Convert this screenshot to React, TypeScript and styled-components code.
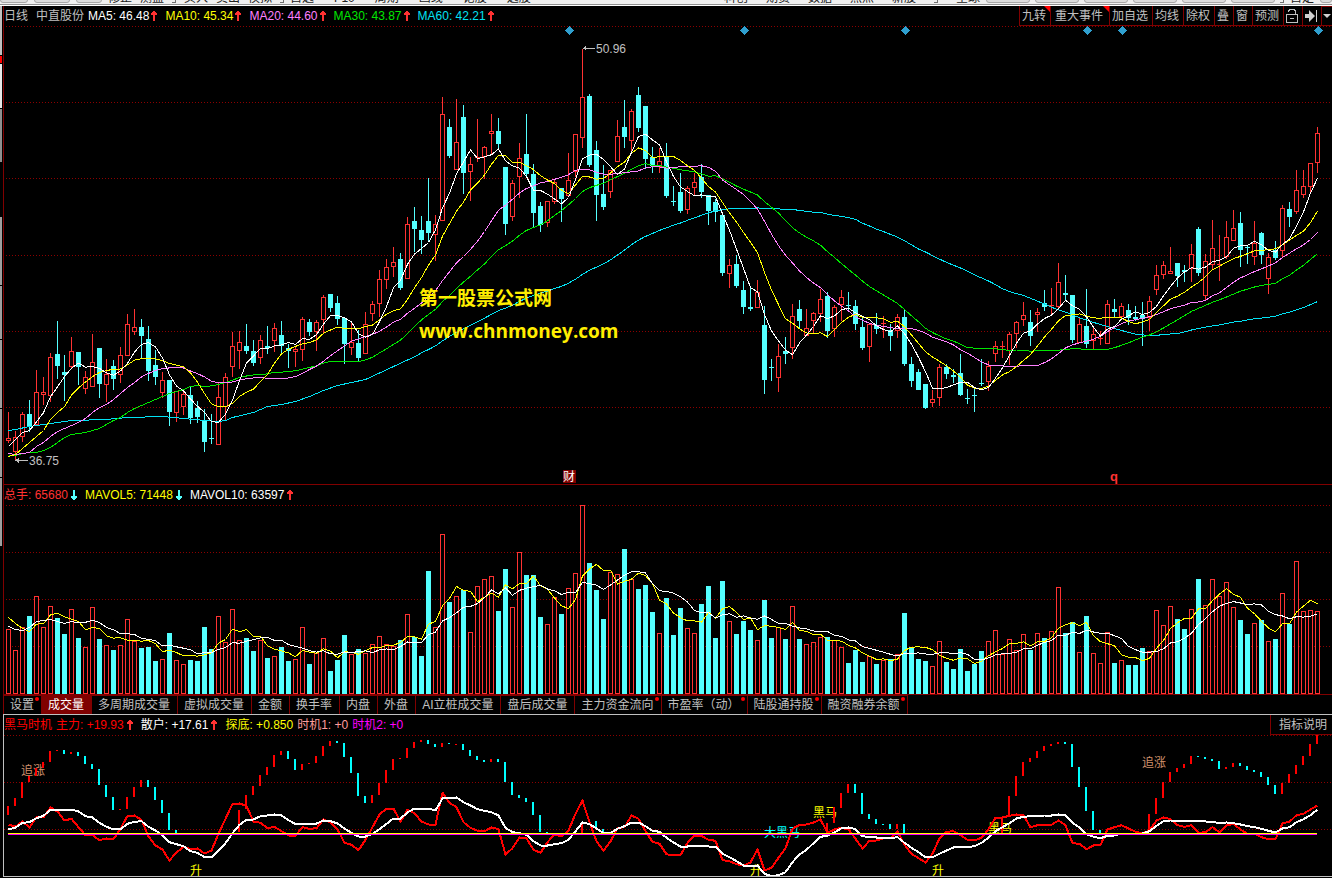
import React from 'react';
import styled, { createGlobalStyle } from 'styled-components';

const GlobalStyle = createGlobalStyle`
  * { box-sizing: border-box; }
  body {
    margin: 0;
    background: #000;
    color: #c0c0c0;
    font: 12px/20px "Liberation Sans", "Noto Sans CJK SC", sans-serif;
  }
  button {
    font: inherit;
    color: inherit;
    background: none;
    border: 0;
    padding: 0;
    cursor: pointer;
  }
`;

/* ---------- colours ---------- */

const UP = '#ff3232';
const DOWN = '#54ffff';
const FRAME = '#800000';
const GRID = '#8c0000';
const WHITE = '#ffffff';
const YELLOW = '#ffff00';
const PINK = '#ff80ff';
const GREEN = '#00e600';
const AQUA = '#02e2f4';

/* ---------- market data ---------- */

type Direction = 'u' | 'd';
interface Bar {
  dir: Direction;
  high: number;
  top: number;
  bottom: number;
  low: number;
  volume: number;
}

// One session per entry: direction, high, body top, body bottom, low, volume top.
const SESSIONS = `
u 412 438 440 443 629|u 431 437 451 460 650|u 412 414 436 442 627|d 400 414 427 432 616
u 370 392 424 425 596|u 377 392 394 405 627|u 353 357 395 402 606|d 321 354 366 379 618
d 355 372 375 401 634|u 337 351 366 369 609|d 352 352 367 385 638|u 371 377 388 394 647
u 334 362 386 386 607|d 348 348 384 398 639|u 359 374 384 402 645|d 360 366 379 390 650
u 347 355 374 383 645|u 314 324 355 355 619|u 309 327 331 335 641|d 319 327 336 358 648
d 326 339 371 381 647|d 350 365 377 385 661|u 372 380 392 398 659|d 380 380 412 426 633
u 391 391 412 422 660|u 392 394 406 415 664|d 387 395 418 424 660|d 401 408 417 423 661
d 409 420 442 452 627|d 414 438 439 444 649|u 382 397 444 444 616|u 373 377 406 421 642
u 332 346 366 377 609|u 331 342 350 369 640|d 324 346 351 354 638|d 340 351 363 366 651
u 335 340 357 364 640|d 326 346 348 354 658|u 323 328 340 352 656|d 321 335 346 353 647
d 344 348 351 368 661|u 347 349 351 367 659|u 317 319 349 361 627|d 319 322 332 336 664
u 320 322 331 351 653|u 295 297 319 333 638|d 294 294 308 312 671|d 296 303 319 325 660
d 318 318 344 364 635|u 323 342 347 355 654|d 330 343 358 361 649|u 312 324 353 353 653
u 301 304 313 321 644|u 270 279 303 317 636|u 259 267 279 289 644|u 247 262 266 277 646
d 253 259 288 290 640|u 217 224 278 278 614|d 207 221 229 252 637|d 216 230 240 254 656
d 178 221 233 242 571|u 215 224 234 261 627|u 97 114 220 220 534|d 119 127 156 158 602
u 99 142 169 169 596|d 105 117 173 194 590|u 157 164 171 201 632|u 119 157 158 162 586
u 146 147 156 179 579|u 114 131 133 155 576|d 118 131 144 150 611|d 167 167 224 235 569
u 180 183 216 221 607|u 143 158 176 198 552|d 114 154 174 177 575|d 164 174 213 227 575
d 202 206 225 232 617|u 201 201 222 227 624|u 179 182 201 204 597|d 188 188 199 222 614
u 153 180 195 195 588|u 134 134 171 177 573|u 49 97 137 148 505|d 94 96 165 167 563
d 141 150 195 221 590|d 165 194 207 210 619|u 170 170 191 198 572|u 120 136 161 161 574
d 100 127 137 148 549|u 109 111 140 152 579|d 87 95 128 132 589|d 106 106 159 169 585
d 147 157 166 173 612|u 148 161 166 173 633|d 143 157 196 198 598|d 186 201 202 206 635
d 173 192 211 213 608|u 186 188 209 214 628|u 173 182 187 195 633|d 164 177 192 198 604
d 195 195 211 225 586|d 199 202 212 222 638|d 212 215 273 276 581|u 259 265 273 288 621
d 255 264 286 288 634|d 281 290 307 314 621|d 287 307 309 311 630|u 280 292 307 307 640
d 306 325 380 394 600|d 359 367 368 381 638|u 344 356 377 392 627|d 337 351 354 364 639
u 304 316 347 359 606|d 300 309 321 329 639|u 309 328 335 336 644|u 312 313 320 333 642
u 289 299 313 322 637|d 292 296 331 338 637|u 305 307 328 337 640|u 290 297 304 321 647
d 292 305 306 312 663|d 300 306 324 330 650|d 318 327 348 350 662|u 323 324 346 362 656
d 313 325 329 334 664|u 316 323 324 338 660|d 324 330 336 351 659|u 314 317 330 338 654
d 309 317 364 366 613|d 357 364 381 387 647|d 369 372 390 390 659|d 384 384 408 409 661
u 390 399 402 407 666|u 364 367 397 406 641|d 364 367 374 379 662|d 369 375 377 383 669
d 354 373 395 396 649|d 389 398 399 404 671|d 388 395 396 412 664|d 359 383 384 386 651
u 361 366 381 391 641|u 341 346 353 362 630|u 341 346 347 358 654|u 332 334 350 365 639
u 321 322 333 348 650|u 302 315 319 326 634|d 310 322 336 346 650|u 308 312 314 332 633
d 290 303 307 311 638|u 288 305 306 314 631|u 263 282 306 310 587|d 275 293 295 301 633
d 295 295 340 343 622|u 318 324 342 342 652|d 289 326 344 348 616|u 328 334 340 350 653
u 331 338 339 345 663|u 300 304 343 343 632|d 299 309 312 317 663|u 303 306 316 318 660
d 304 310 318 325 665|d 306 317 319 321 665|d 302 315 319 346 648|u 296 301 317 331 651
u 265 275 289 295 610|u 261 265 274 279 625|u 247 271 273 273 606|d 263 263 276 287 619
d 265 270 272 282 629|u 244 254 268 282 609|d 227 229 273 276 579|u 254 261 295 301 605
u 220 248 264 269 579|u 235 264 265 281 596|u 221 237 256 259 582|u 210 228 240 240 607
d 212 223 250 267 620|d 245 247 248 264 634|u 221 243 256 265 623|d 232 233 255 264 620
u 253 257 278 294 641|d 241 250 258 260 639|u 205 208 250 257 593|d 202 209 217 227 624
u 170 190 211 214 561|u 170 186 194 198 611|u 163 163 186 192 610|u 127 133 162 173 611
`;

const BARS: Bar[] = SESSIONS.trim()
  .split(/[|\n]/)
  .map((entry) => {
    const [dir, ...n] = entry.trim().split(' ');
    const [high, top, bottom, low, volume] = n.map(Number);
    return { dir: dir as Direction, high, top, bottom, low, volume };
  });

const PITCH = 7;
const barX = (i: number) => 4 + PITCH * i;

type Key = [number, number];

// Linear interpolation through sparse keys; covers sessions older than the window.
function between(keys: Key[], i: number): number {
  for (let k = 1; k < keys.length; k++) {
    const [x0, y0] = keys[k - 1];
    const [x1, y1] = keys[k];
    if (i <= x1) return y0 + ((y1 - y0) * (i - x0)) / (x1 - x0);
  }
  return keys[keys.length - 1][1];
}

function average(values: number[], period: number, lead: Key[]): number[] {
  return values.map((_, i) => {
    if (i < period - 1) return between(lead, i);
    let sum = 0;
    for (let k = i - period + 1; k <= i; k++) sum += values[k];
    return sum / period;
  });
}

const CLOSES = BARS.map((b) => (b.dir === 'u' ? b.top : b.bottom - 1));
const VOLUMES = BARS.map((b) => b.volume);

const seq = (...ys: number[]): Key[] => ys.map((y, i) => [i, y]);

const PRICE_LINES: { color: string; values: number[] }[] = [
  {
    color: AQUA,
    values: average(CLOSES, 60, [
      [0, 430], [1, 429], [3, 426], [5, 424], [7, 422], [9, 420], [14, 419], [17, 417], [22, 416],
      [25, 418], [28, 420], [30, 421], [31, 420], [32, 417], [35, 412], [37, 406], [39, 404],
      [41, 401], [43, 396], [45, 390], [47, 385], [51, 379], [59, 353],
    ]),
  },
  {
    color: GREEN,
    values: average(CLOSES, 30, seq(
      455, 455, 453, 452, 452, 450, 447, 442, 437, 434, 433, 432, 430, 428, 424, 420, 417, 412,
      408, 405, 402, 399, 396, 393, 391, 389, 386, 385, 386,
    )),
  },
  {
    color: PINK,
    values: average(CLOSES, 20, seq(
      453, 454, 453, 452, 446, 442, 436, 431, 428, 425, 422, 418, 412, 407, 404, 399, 393, 387, 382,
    )),
  },
  { color: YELLOW, values: average(CLOSES, 10, seq(456, 454, 448, 442, 436, 430, 419, 412, 406)) },
  { color: WHITE, values: average(CLOSES, 5, seq(446, 439, 432, 430)) },
];

const VOLUME_LINES = [
  { color: YELLOW, values: average(VOLUMES, 5, seq(617, 623, 628, 631)) },
  { color: WHITE, values: average(VOLUMES, 10, seq(626, 629, 630, 627, 621, 620, 619, 621, 623)) },
];

/* ---------- oscillator data, three units to the pixel ---------- */

const MAIN_FORCE = [
  343, 348, 333, 351, 320, 321, 291, 303, 330, 325, 350, 374, 374, 389, 384, 386, 355, 316, 315, 328,
  378, 405, 417, 450, 425, 410, 415, 414, 429, 420, 370, 325, 280, 279, 286, 333, 337, 353, 349, 362,
  375, 375, 350, 355, 353, 327, 337, 357, 397, 403, 419, 388, 350, 312, 294, 294, 334, 298, 308, 333,
  342, 342, 247, 277, 290, 335, 352, 361, 362, 351, 356, 432, 413, 381, 384, 418, 427, 395, 372, 378,
  360, 310, 270, 335, 392, 420, 393, 353, 350, 315, 325, 362, 394, 400, 431, 435, 434, 397, 375, 376,
  388, 391, 449, 452, 461, 465, 456, 417, 480, 472, 442, 413, 355, 343, 342, 336, 327, 367, 357, 352,
  357, 385, 414, 391, 390, 383, 383, 363, 403, 430, 443, 456, 430, 383, 364, 362, 374, 388, 390, 382,
  356, 322, 321, 316, 312, 314, 350, 344, 343, 343, 330, 344, 398, 400, 416, 405, 404, 357, 350, 344,
  354, 364, 368, 360, 330, 321, 326, 344, 349, 344, 367, 365, 350, 366, 345, 340, 357, 370, 370, 380,
  386, 386, 338, 334, 314, 310, 297, 285,
];

const RETAIL = [
  357, 351, 337, 335, 323, 316, 297, 297, 297, 297, 303, 317, 321, 337, 349, 357, 356, 340, 334, 332,
  349, 360, 375, 395, 401, 407, 422, 427, 440, 440, 420, 398, 368, 343, 328, 327, 317, 315, 312, 315,
  329, 341, 340, 342, 339, 330, 332, 339, 354, 367, 378, 378, 370, 356, 340, 324, 324, 306, 294, 294,
  294, 300, 264, 263, 261, 275, 285, 296, 301, 305, 315, 352, 365, 368, 373, 392, 405, 405, 401, 398,
  388, 362, 336, 341, 354, 368, 368, 355, 347, 336, 336, 347, 361, 364, 382, 396, 408, 408, 406, 407,
  408, 408, 430, 440, 452, 465, 468, 465, 490, 497, 494, 485, 455, 432, 418, 398, 379, 376, 366, 353,
  351, 356, 377, 380, 381, 384, 383, 380, 397, 412, 425, 440, 440, 430, 420, 411, 410, 410, 407, 397,
  382, 362, 350, 338, 324, 319, 317, 316, 315, 315, 312, 315, 337, 351, 371, 379, 383, 376, 375, 369,
  369, 369, 369, 362, 346, 332, 330, 330, 330, 330, 332, 333, 334, 338, 336, 338, 342, 347, 350, 355,
  361, 366, 354, 350, 335, 326, 314, 297,
];

const toPixels = (values: number[]) => values.map((v) => 710 + v / 3);

// Runs of momentum strokes: first session, then direction/top/bottom for each one.
const MOMENTUM: [number, string][] = [
  [0, 'u806-815 u798-806 u782-798 u776-782 u768-776 u762-768 u751-762 u750-751 d750-754 u752-754 d752-756 d756-764 d764-769 d769-785 d785-797 d797-810 u809-810 u797-809 u787-797 u780-787 d780-787 d787-800 d800-813 d813-830 d830-834'],
  [33, 'u810-832 u795-809 u786-795 u775-786 u767-775 u755-767 u751-755 d751-759 d759-770 u764-770 u763-764 u756-763 u746-756 u741-746 d741-743 d743-757 d757-773 d773-796 d796-803 u795-803 u783-795 u770-783 u759-770 u758-759 u748-758 u742-748 u740-742 d740-744 d744-747 u743-747 d743-744 u744-745 d744-750 d750-756 d756-760 d760-762 u759-762 d759-762 d762-782 d782-795 d795-798 d798-802 d802-815 d815-832 d832-834'],
  [82, 'u823-834'],
  [84, 'd821-827 d829-834'],
  [93, 'd832-834'],
  [117, 'u823-834 u807-823 u793-808 u784-793 d784-793 d793-814 d814-819 d819-824 d824-825 d824-829 u824-829 d824-834'],
  [142, 'u817-834 u796-817 u776-796 u762-776 u758-762 u751-758 u746-751 u744-746 u742-744 d742-744 d744-767 d767-787 d787-811 d811-830 d830-834'],
  [163, 'u814-830 u798-814 u782-798 u772-782 u768-772 u764-768 u756-764 d756-757 d757-759 d759-761 d761-769 u767-769 u763-767 d763-766 d766-770 d770-772 d772-777 d777-785 d785-794 u783-794 u774-783 u765-774 u756-765 u744-756 u735-744'],
];

const STROKES = MOMENTUM.flatMap(([first, run]) =>
  run.split(' ').map((s, k) => {
    const [top, bottom] = s.slice(1).split('-').map(Number);
    return { i: first + k, up: s[0] === 'u', top, bottom };
  }),
);

/* ---------- layout ---------- */

const Page = styled.main`
  display: flex;
  flex-direction: column;
  min-height: 100vh;
  background: #000;
  overflow: hidden;
`;

const CommandBar = styled.nav`
  display: flex;
  align-items: flex-end;
  height: 6px;
  overflow: hidden;
  background: #f0f0f0;
  border-bottom: 1px solid #fff;
  box-shadow: inset 0 -1px 0 #909090;
  color: #202020;
  white-space: nowrap;
`;

const CommandGroup = styled.div<{ $gap?: number; $push?: boolean }>`
  display: flex;
  align-items: flex-end;
  gap: ${(p) => p.$gap ?? 6}px;
  margin-left: ${(p) => (p.$push ? 'auto' : '6px')};
`;

const Command = styled.button`
  line-height: 12px;
  height: 14px;
`;

const CommandSlot = styled.span<{ $width: number }>`
  width: ${(p) => p.$width}px;
  height: 14px;
  margin-bottom: 2px;
  background: #dcdcdc;
  border: 1px solid #a8a8a8;
  border-radius: 3px;
`;

const Divider = styled.span`
  width: 4px;
  height: 14px;
  margin-bottom: 2px;
  border: solid #707070;
  border-width: 0 1px 1px 0;
`;

const Desk = styled.div`
  display: flex;
`;

const Rail = styled.aside`
  display: flex;
  flex-direction: column;
  flex: 0 0 3px;
  padding-right: 1px;
`;

const RailTab = styled.span<{ $height: number; $color: string }>`
  height: ${(p) => p.$height}px;
  background: ${(p) => p.$color};
  border-bottom: 1px solid #000;
`;

const Workspace = styled.div`
  flex: 1;
  min-width: 0;
`;

const Panel = styled.section`
  border-left: 1px solid ${FRAME};
  border-bottom: 1px solid ${FRAME};
`;

const IndicatorPanel = styled.section`
  border: solid #c0c0c0;
  border-width: 1px 0 1px 1px;
`;

const PanelHead = styled.header`
  display: flex;
  justify-content: space-between;
  height: 20px;
  white-space: nowrap;
`;

const Readouts = styled.div<{ $gap: number }>`
  display: flex;
  gap: ${(p) => p.$gap}px;
`;

const Readout = styled.span<{ $color?: string; $gap?: number }>`
  display: flex;
  align-items: center;
  gap: ${(p) => p.$gap ?? 2}px;
  color: ${(p) => p.$color ?? '#c0c0c0'};
`;

const ToolRow = styled.div`
  display: flex;
  height: 20px;
  border-bottom: 1px solid ${FRAME};
`;

const Tool = styled.button<{ $wide?: boolean }>`
  position: relative;
  display: flex;
  align-items: center;
  justify-content: center;
  padding: 1px ${(p) => (p.$wide ? '6px 0 4px' : '4px 0 2px')};
  border-left: 1px solid ${FRAME};
`;

const MoreTool = styled(Tool)`
  padding: 1px 1px 0;
  border-top: 1px solid ${FRAME};
`;

const Corner = styled.i`
  position: absolute;
  top: 0;
  right: 0;
  border-top: 6px solid #ff0000;
  border-left: 6px solid transparent;
`;

const Plot = styled.svg<{ $height: number }>`
  display: block;
  width: 100%;
  height: ${(p) => p.$height}px;
  overflow: hidden;
`;

const TabRow = styled.div`
  display: flex;
  height: 19px;
  border-left: 1px solid ${FRAME};
`;

const Tab = styled.button<{ $active?: boolean }>`
  position: relative;
  padding: 0 7px 0 6px;
  line-height: 18px;
  white-space: nowrap;
  border-top: 1px solid ${FRAME};
  border-right: 1px solid ${FRAME};
  background: ${(p) => (p.$active ? FRAME : 'none')};
  color: ${(p) => (p.$active ? WHITE : '#c0c0c0')};
`;

const NewDot = styled.i`
  position: absolute;
  top: 1px;
  right: 2px;
  width: 4px;
  height: 4px;
  border-radius: 2px;
  background: #ff0000;
`;

const HelpButton = styled.button`
  padding: 0 5px 0 8px;
  border-left: 1px solid ${FRAME};
  border-bottom: 1px solid ${FRAME};
`;

/* ---------- drawing parts ---------- */

function Arrow({ up }: { up: boolean }) {
  return (
    <svg width="6" height="12" viewBox="0 0 6 12" shapeRendering="crispEdges" aria-hidden="true">
      <path
        fill={up ? UP : DOWN}
        d={
          up
            ? 'M2 1h2v1h1v1h1v2H4v6H2V5H0V3h1V2h1z'
            : 'M2 1h2v6h2v2H5v1H4v1H2v-1H1V9H0V7h2z'
        }
      />
    </svg>
  );
}

function GridLine({ y, from = 2 }: { y: number; from?: number }) {
  return <line x1={from} x2="100%" y1={y + 0.5} y2={y + 0.5} stroke={GRID} strokeDasharray="1 2" />;
}

function Curve({ values, color, width = 1 }: { values: number[]; color: string; width?: number }) {
  return (
    <polyline
      fill="none"
      stroke={color}
      strokeWidth={width}
      strokeLinejoin="round"
      points={values.map((y, i) => `${barX(i) + 0.5},${(y + 0.5).toFixed(1)}`).join(' ')}
    />
  );
}

function Candle({ bar, x }: { bar: Bar; x: number }) {
  const { dir, high, top, bottom, low } = bar;
  if (dir === 'd') {
    return (
      <path fill={DOWN} d={`M${x} ${high}h1V${low}h-1zM${x - 2} ${top}h5V${bottom}h-5z`} />
    );
  }
  if (bottom - top < 2) {
    return <path fill={UP} d={`M${x} ${high}h1V${low}h-1zM${x - 2} ${top}h5v1h-5z`} />;
  }
  return (
    <g>
      <path fill={UP} d={`M${x} ${high}h1V${top}h-1zM${x} ${bottom}h1V${Math.max(low, bottom)}h-1z`} />
      <rect x={x - 1.5} y={top + 0.5} width="4" height={bottom - top} fill="#000" stroke={UP} />
    </g>
  );
}

const EVENT_MARKS = [565, 740, 901, 1083, 1118, 1314];

function PricePlot() {
  return (
    <Plot $height={458} shapeRendering="crispEdges" role="img" aria-label="日线 K线图">
      <g transform="translate(0,-26)">
        {[26, 102, 178, 255, 331, 407].map((y) => (
          <GridLine key={y} y={y} />
        ))}
        {BARS.map((bar, i) => (
          <Candle key={i} bar={bar} x={barX(i)} />
        ))}
        {PRICE_LINES.map((l) => (
          <Curve key={l.color} {...l} />
        ))}
        {EVENT_MARKS.map((x) => (
          <path key={x} fill="#2f9fcf" d={`M${x}.5 26l4.5 4.5l-4.5 4.5l-4.5-4.5z`} />
        ))}
        <g fill="#c0c0c0">
          <path d="M579 48h12v1h-12zM579 48l3-2v5z" />
          <text x="592" y="53">50.96</text>
          <path d="M11 460h13v1H11zM11 460l4-2v5z" />
          <text x="25" y="465">36.75</text>
        </g>
        <g fill="#ffee00" fontSize="19" fontWeight="700">
          <text x="415" y="305" fontFamily='"Noto Sans CJK SC", sans-serif'>
            第一股票公式网
          </text>
          <text x="415" y="338" fontFamily='"Open Sans", "Noto Sans", sans-serif'>
            www.chnmoney.com
          </text>
        </g>
        <rect x="559" y="470" width="13" height="13" fill={FRAME} />
        <text x="559" y="481" fill={WHITE}>财</text>
        <text x="1106" y="481" fill={UP} fontSize="13" fontWeight="700">q</text>
      </g>
    </Plot>
  );
}

function VolumePlot() {
  return (
    <Plot $height={189} shapeRendering="crispEdges" role="img" aria-label="成交量">
      <g transform="translate(0,-505)">
        {[505, 552, 599, 646].map((y) => (
          <GridLine key={y} y={y} />
        ))}
        {BARS.map((b, i) =>
          b.dir === 'u' ? (
            <rect
              key={i}
              x={barX(i) - 1.5}
              y={b.volume + 0.5}
              width="4"
              height={693 - b.volume}
              fill="#000"
              stroke={UP}
            />
          ) : (
            <rect key={i} x={barX(i) - 2} y={b.volume} width="5" height={694 - b.volume} fill={DOWN} />
          ),
        )}
        {VOLUME_LINES.map((l) => (
          <Curve key={l.color} {...l} />
        ))}
      </g>
    </Plot>
  );
}

const SIGNALS: [string, number, number, string][] = [
  ['追涨', 17, 775, '#d0906c'],
  ['升', 186, 875, YELLOW],
  ['升', 746, 875, YELLOW],
  ['大黑马', 760, 837, '#00ffff'],
  ['黑马', 809, 817, YELLOW],
  ['升', 928, 875, YELLOW],
  ['黑马', 984, 833, YELLOW],
  ['追涨', 1138, 767, '#d0906c'],
];

function IndicatorPlot() {
  const end = barX(BARS.length - 1);
  return (
    <Plot $height={141} shapeRendering="crispEdges" role="img" aria-label="黑马时机">
      <g transform="translate(0,-735)">
        {[735, 782, 829].map((y) => (
          <GridLine key={y} y={y} from={0} />
        ))}
        {SIGNALS.map(([label, x, y, color]) => (
          <text key={x} x={x} y={y} fill={color}>
            {label}
          </text>
        ))}
        {STROKES.map((s) => (
          <rect
            key={s.i}
            x={barX(s.i) - 1}
            y={s.top}
            width="2"
            height={s.bottom - s.top}
            fill={s.up ? '#ff0000' : '#00ffff'}
          />
        ))}
        <Curve values={toPixels(MAIN_FORCE)} color="#ff0000" width={2} />
        <Curve values={toPixels(RETAIL)} color={WHITE} width={2} />
        <path fill={YELLOW} d={`M4 833H${end}v1H4z`} />
        <path fill="#ff00ff" d={`M4 834H${end}v1H4z`} />
      </g>
    </Plot>
  );
}

/* ---------- content ---------- */

const AVERAGES = [
  { text: 'MA5: 46.48', color: WHITE },
  { text: 'MA10: 45.34', color: YELLOW },
  { text: 'MA20: 44.60', color: PINK },
  { text: 'MA30: 43.87', color: GREEN },
  { text: 'MA60: 42.21', color: AQUA },
];

const TABS: { label: string; dot?: boolean; active?: boolean }[] = [
  { label: '设置', dot: true },
  { label: '成交量', active: true },
  { label: '多周期成交量' },
  { label: '虚拟成交量' },
  { label: '金额' },
  { label: '换手率' },
  { label: '内盘' },
  { label: '外盘' },
  { label: 'AI立桩成交量' },
  { label: '盘后成交量' },
  { label: '主力资金流向', dot: true },
  { label: '市盈率（动）', dot: true },
  { label: '陆股通持股', dot: true },
  { label: '融资融券余额', dot: true },
];

function LockIcon() {
  return (
    <svg
      width="12"
      height="14"
      viewBox="0 0 12 14"
      fill="none"
      stroke="#c0c0c0"
      shapeRendering="crispEdges"
      aria-hidden="true"
    >
      <path d="M.5 5.5h11v8H.5zM2.5 3V1.5h1V.5h5v1h1v4M4 9.5h4" />
    </svg>
  );
}

function JumpIcon() {
  return (
    <svg width="12" height="12" viewBox="0 0 12 12" fill="#d0d0d0" aria-hidden="true">
      <path d="M0 4h4V0l6 6-6 6V8H0zM11 0h1v12h-1z" />
    </svg>
  );
}

function CaretIcon() {
  return (
    <svg width="8" height="5" viewBox="0 0 8 5" fill="#d0d0d0" aria-hidden="true">
      <path d="M0 0h8L4 4z" />
    </svg>
  );
}

export default function App() {
  return (
    <Page>
      <GlobalStyle />
      <CommandBar aria-label="工具栏">
        <CommandSlot $width={28} />
        <CommandGroup>
          <CommandSlot $width={36} />
          <CommandSlot $width={26} />
        </CommandGroup>
        <CommandGroup $gap={8}>
          <Command>修正</Command>
          <Command>测盘</Command>
          <Divider />
          <Command>买入</Command>
          <Command>卖出</Command>
          <Command>模拟</Command>
          <Divider />
        </CommandGroup>
        <CommandGroup $gap={20}>
          <Command>自选</Command>
          <Command>F10</Command>
          <Command>周期</Command>
          <Command>画线</Command>
          <Command>论股</Command>
          <Command>选股</Command>
        </CommandGroup>
        <CommandGroup $gap={18} $push>
          <Command>科创</Command>
          <Command>期货</Command>
          <Command>数据</Command>
          <Command>热点</Command>
          <Command>新股</Command>
          <Divider />
          <Command>全球</Command>
        </CommandGroup>
        <CommandGroup $gap={5}>
          <CommandSlot $width={44} />
          <CommandSlot $width={44} />
          <CommandSlot $width={44} />
          <CommandSlot $width={44} />
          <CommandSlot $width={44} />
          <CommandSlot $width={44} />
          <Divider />
        </CommandGroup>
        <CommandGroup>
          <Command>自定</Command>
          <CommandSlot $width={12} />
        </CommandGroup>
      </CommandBar>

      <Desk>
        <Rail>
          <RailTab $height={50} $color="#c0c0c0" />
          <RailTab $height={8} $color="#ff0000" />
          <RailTab $height={45} $color="#e8e8e8" />
          <RailTab $height={54} $color="#909090" />
          <RailTab $height={54} $color="#000000" />
          <RailTab $height={69} $color="#a0a0a0" />
          <RailTab $height={54} $color="#a0a0a0" />
          <RailTab $height={69} $color="#a0a0a0" />
          <RailTab $height={69} $color="#a0a0a0" />
          <RailTab $height={69} $color="#a0a0a0" />
        </Rail>
        <Workspace>
          <Panel>
            <PanelHead>
              <Readouts $gap={4}>
                <Readouts $gap={8}>
                  <Readout>日线</Readout>
                  <Readout>中直股份</Readout>
                </Readouts>
                <Readouts $gap={8}>
                  {AVERAGES.map((a) => (
                    <Readout key={a.text} $color={a.color}>
                      {a.text}
                      <Arrow up />
                    </Readout>
                  ))}
                </Readouts>
              </Readouts>
              <ToolRow>
                <Tool>九转<Corner /></Tool>
                <Tool $wide>重大事件<Corner /></Tool>
                <Tool>加自选</Tool>
                <Tool>均线</Tool>
                <Tool>除权</Tool>
                <Tool>叠</Tool>
                <Tool>窗</Tool>
                <Tool>预测</Tool>
                <Tool aria-label="锁定"><LockIcon /></Tool>
                <Tool aria-label="收起"><JumpIcon /></Tool>
                <MoreTool aria-label="更多"><CaretIcon /></MoreTool>
              </ToolRow>
            </PanelHead>
            <PricePlot />
          </Panel>

          <Panel>
            <PanelHead>
              <Readouts $gap={8}>
                <Readout $gap={3} $color={UP}>总手: 65680<Arrow up={false} /></Readout>
                <Readout $gap={3} $color={YELLOW}>MAVOL5: 71448<Arrow up={false} /></Readout>
                <Readout $gap={3} $color={WHITE}>MAVOL10: 63597<Arrow up /></Readout>
              </Readouts>
            </PanelHead>
            <VolumePlot />
          </Panel>

          <TabRow>
            {TABS.map((t) => (
              <Tab key={t.label} $active={t.active}>
                {t.label}
                {t.dot && <NewDot />}
              </Tab>
            ))}
          </TabRow>

          <IndicatorPanel>
            <PanelHead>
              <Readouts $gap={4}>
                <Readout $color="#ff0000">黑马时机</Readout>
                <Readouts $gap={8}>
                  <Readout $gap={3} $color="#ff0000">主力: +19.93<Arrow up /></Readout>
                  <Readout $gap={3} $color={WHITE}>散户: +17.61<Arrow up /></Readout>
                  <Readout $color={YELLOW}>探底: +0.850</Readout>
                </Readouts>
                <Readout $color="#ff9c9c">时机1: +0</Readout>
                <Readout $color="#ff00ff">时机2: +0</Readout>
              </Readouts>
              <HelpButton>指标说明</HelpButton>
            </PanelHead>
            <IndicatorPlot />
          </IndicatorPanel>
        </Workspace>
      </Desk>
    </Page>
  );
}
